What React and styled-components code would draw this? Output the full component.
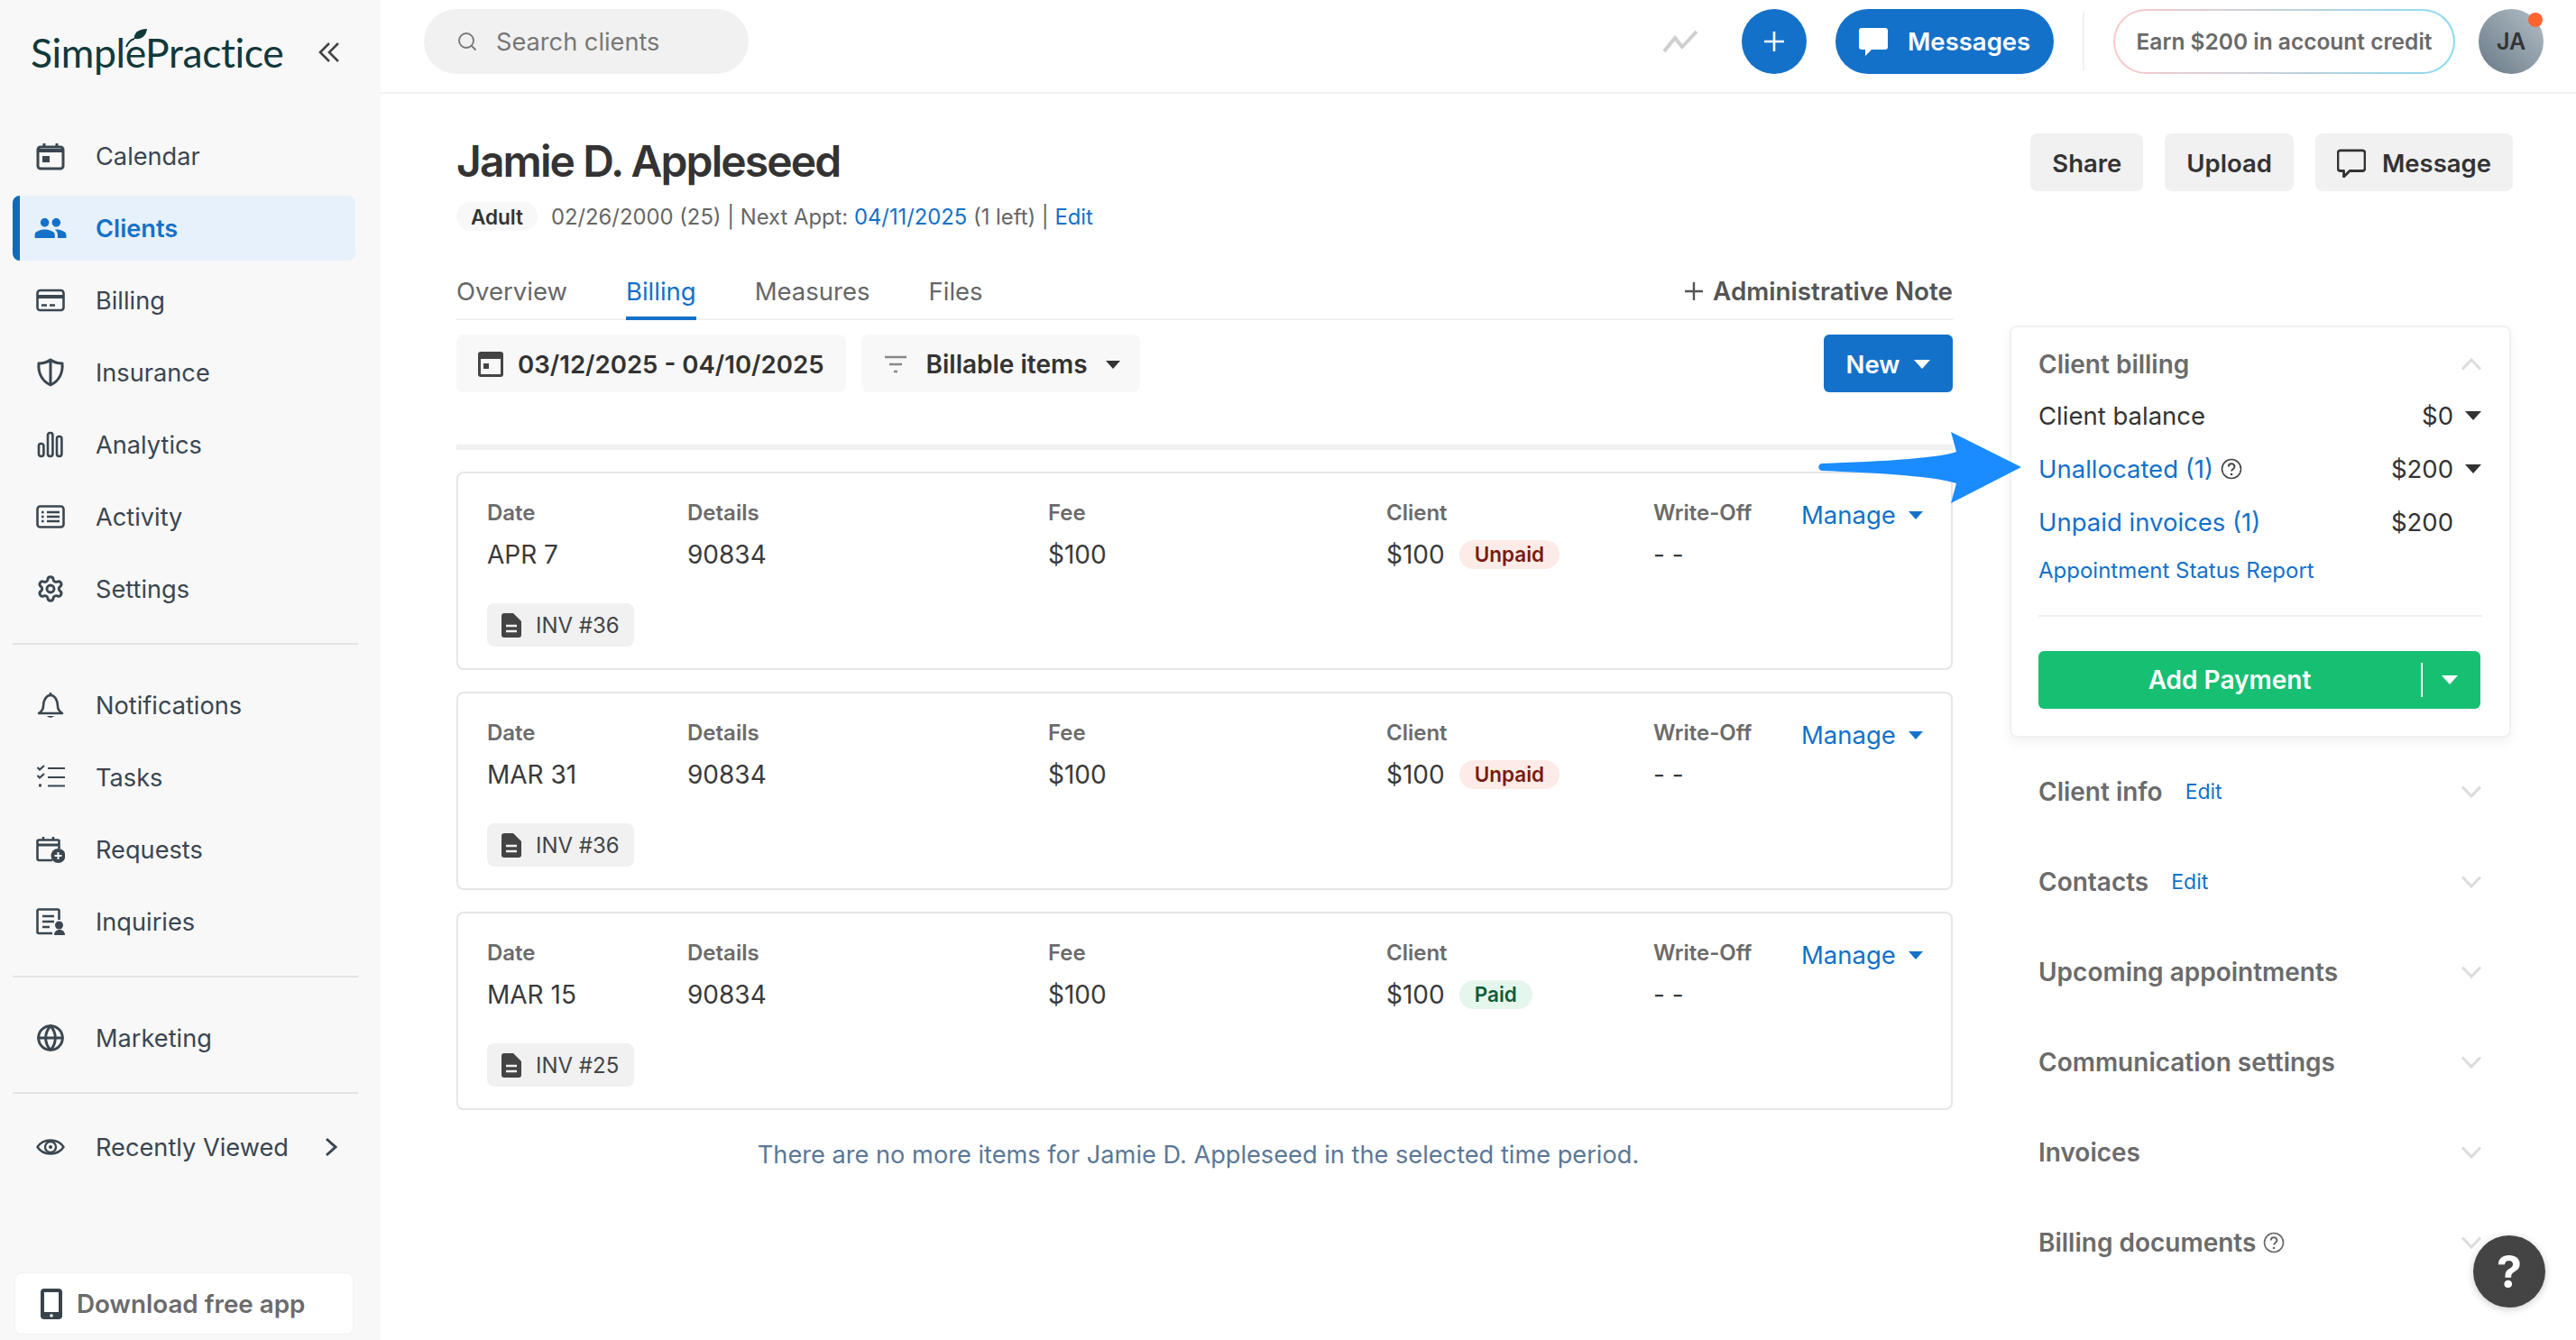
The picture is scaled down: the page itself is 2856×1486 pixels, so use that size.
import { createGlobalStyle, styled } from "styled-components";
import { Globe, Settings, Search } from "lucide-react";
import { MdPeople } from "react-icons/md";

const BLUE = "#1471c9";

const GlobalStyle = createGlobalStyle`
  html, body {
    margin: 0;
    padding: 0;
    background: #fff;
  }
  * {
    box-sizing: border-box;
  }
  body {
    font-family: Inter, "Liberation Sans", sans-serif;
    color: #333;
  }
`;

const CalendarIcon = () => (
  <svg width="32" height="32" viewBox="0 0 32 32" fill="none" stroke="currentColor" strokeWidth="3">
    <rect x="2" y="6" width="28" height="24" rx="3" />
    <path d="M2 10h28" strokeWidth="4" />
    <path d="M9 2v5M23 2v5" />
    <rect x="7" y="16" width="8" height="7" fill="currentColor" stroke="none" />
  </svg>
);

const CardIcon = () => (
  <svg width="32" height="32" viewBox="0 0 32 32" fill="none" stroke="currentColor" strokeWidth="2.6">
    <rect x="1.5" y="5" width="29" height="22" rx="3" />
    <path d="M1.5 12h29" strokeWidth="4" />
    <path d="M6 21.5h6M15 21.5h6" />
  </svg>
);

const ShieldIcon = () => (
  <svg width="32" height="32" viewBox="0 0 32 32" fill="none" stroke="currentColor" strokeWidth="3">
    <path d="M16 2c4 3 9 4 13 4 1 11-4 20-13 24C7 26 2 17 3 6c4 0 9-1 13-4z" strokeLinejoin="round" />
    <path d="M16 2v28" />
  </svg>
);

const BarsIcon = () => (
  <svg width="32" height="32" viewBox="0 0 32 32" fill="none" stroke="currentColor" strokeWidth="2.6">
    <rect x="3" y="15" width="5.4" height="14" rx="2.4" />
    <rect x="13" y="3" width="5.4" height="26" rx="2.4" />
    <rect x="23" y="7" width="5.4" height="22" rx="2.4" />
  </svg>
);

const ListBoxIcon = () => (
  <svg width="32" height="32" viewBox="0 0 32 32" fill="none" stroke="currentColor" strokeWidth="2.6">
    <rect x="1.5" y="4.5" width="29" height="23" rx="3" />
    <path d="M12 11h14M12 16h14M12 21h14" />
    <path d="M6 11h2.6M6 16h2.6M6 21h2.6" />
  </svg>
);

const BellIcon = () => (
  <svg width="32" height="32" viewBox="0 0 32 32" fill="none" stroke="currentColor" strokeWidth="2.6">
    <path d="M3 25c3-2 5-4 5-8 0-6 3-12 8-12s8 6 8 12c0 4 2 6 5 8H3z" strokeLinejoin="round" />
    <path d="M16 2v3" />
    <path d="M12 28c2 2.4 6 2.4 8 0z" fill="currentColor" stroke="none" />
  </svg>
);

const TasksIcon = () => (
  <svg width="32" height="32" viewBox="0 0 32 32" fill="none" stroke="currentColor" strokeWidth="2.2">
    <path d="M1.5 5l2.5 2.5L9 3M1.5 14l2.5 2.5L9 12" />
    <path d="M3 25h3" strokeWidth="3" />
    <path d="M13 6h19M13 16h19M13 25.500h19" />
  </svg>
);

const RequestIcon = () => (
  <svg width="32" height="32" viewBox="0 0 32 32" fill="none" stroke="currentColor" strokeWidth="2.6">
    <path d="M18 28H3a1.500 1.500 0 0 1-1.500-1.500V7A1.500 1.500 0 0 1 3 5.500h21A1.500 1.500 0 0 1 25.500 7v8" />
    <path d="M1.500 11h24" strokeWidth="3" />
    <path d="M8 2v4M19 2v4" />
    <circle cx="24.500" cy="23" r="8" fill="currentColor" stroke="none" />
    <path d="M24.500 19v8M20.500 23h8" stroke="#f8f8f8" strokeWidth="2" />
  </svg>
);

const InquiryIcon = () => (
  <svg width="32" height="32" viewBox="0 0 32 32" fill="none" stroke="currentColor" strokeWidth="2.6">
    <path d="M18 29H3a1.500 1.500 0 0 1-1.500-1.500V4A1.500 1.500 0 0 1 3 2.500h21A1.500 1.500 0 0 1 25.500 4v10" />
    <path d="M7 10h13M7 16h13M7 22h8" />
    <circle cx="25.500" cy="20" r="4.500" fill="currentColor" stroke="none" />
    <path d="M20 31c0-8 12-8 12 0z" fill="currentColor" stroke="none" />
  </svg>
);

const EyeIcon = () => (
  <svg width="32" height="32" viewBox="0 0 32 32" fill="none" stroke="currentColor" strokeWidth="2.4">
    <path d="M1.500 16C8 6 24 6 30.500 16 24 26 8 26 1.500 16z" strokeLinejoin="round" />
    <circle cx="16" cy="16" r="6" />
    <circle cx="16" cy="16" r="2" fill="currentColor" stroke="none" />
  </svg>
);

const TabletIcon = () => (
  <svg width="24" height="34" viewBox="0 0 24 34">
    <rect width="24" height="34" rx="4" fill="#39434b" />
    <rect x="4" y="4" width="16" height="22" fill="#fff" />
    <circle cx="12" cy="30" r="1.800" fill="#fff" />
  </svg>
);

const BubbleIcon = ({ filled, size = 34 }) => (
  <svg width={size} height={size} viewBox="0 0 34 34" fill={filled ? "#fff" : "none"} stroke={filled ? "none" : "currentColor"} strokeWidth="3">
    <path d="M4 2h26a3 3 0 0 1 3 3v18a3 3 0 0 1-3 3H15l-7 7v-7H4a3 3 0 0 1-3-3V5a3 3 0 0 1 3-3z" strokeLinejoin="round" />
  </svg>
);

const DocIcon = () => (
  <svg width="22" height="27" viewBox="0 0 22 27">
    <path d="M3 0h10l9 9v15a3 3 0 0 1-3 3H3a3 3 0 0 1-3-3V3a3 3 0 0 1 3-3z" fill="#444" />
    <path d="M5 14h12M5 20h12" stroke="#f1f1f1" strokeWidth="2.600" />
  </svg>
);

const HelpDot = () => (
  <svg width="24" height="24" viewBox="0 0 24 24" fill="none" stroke="currentColor" strokeWidth="1.600">
    <circle cx="12" cy="12" r="10.500" />
    <path d="M8.800 9.500c0-4.300 6.600-4.300 6.600 0 0 2.600-3.300 2.700-3.300 5" strokeWidth="2" />
    <circle cx="12" cy="18" r="1.300" fill="currentColor" stroke="none" />
  </svg>
);

const Chevron = ({ up }) => (
  <svg width="24" height="14" viewBox="0 0 24 14" fill="none" stroke="#dcdcdc" strokeWidth="3">
    <path d={up ? "M2 12.500L12 2l10 10.500" : "M2 1.500L12 12 22 1.500"} />
  </svg>
);

const Sidebar = styled.aside`
  width: 422px;
  height: 1486px;
  flex: none;
  background: #f8f8f8;
  display: flex;
  flex-direction: column;
  padding: 0 25px 6px 14px;
`;

const LogoBar = styled.div`
  height: 137px;
  flex: none;
  display: flex;
  align-items: flex-start;
  justify-content: space-between;
  padding: 28px 0 0 20px;
`;

const Logo = styled.div`
  position: relative;
  font-family: Lato, sans-serif;
  font-size: 44.5px;
  line-height: 60px;
  letter-spacing: -0.4px;
  color: #12393a;
`;

const Sprout = styled.svg`
  position: absolute;
  left: 102px;
  top: 2px;
`;

const Collapse = styled.svg`
  margin: 18px 20px 0 0;
`;

const NavGroup = styled.nav`
  display: flex;
  flex-direction: column;
  gap: 8px;
  flex: none;
`;

const NavRow = styled.a`
  width: 380px;
  height: 72px;
  display: flex;
  align-items: center;
  gap: 34px;
  padding-left: ${(p) => (p.$active ? "18px" : "26px")};
  border-left: ${(p) => (p.$active ? "8px solid #1469b8" : "0")};
  border-radius: 8px;
  background: ${(p) => (p.$active ? "#e7f1fb" : "transparent")};
  color: ${(p) => (p.$active ? BLUE : "#3a4650")};
  font-size: 27.2px;
  font-weight: ${(p) => (p.$active ? 600 : 400)};
  svg {
    flex: none;
  }
`;

const NavArrow = styled.svg`
  margin-left: auto;
  margin-right: 20px;
`;

const NavLine = styled.hr`
  width: 383px;
  height: 2px;
  border: 0;
  flex: none;
  background: #e3e3e3;
  margin: 24px 0 ${(p) => p.$below || 31}px;
`;

const Download = styled.a`
  margin: auto 0 0 2px;
  height: 69px;
  width: 376px;
  flex: none;
  display: flex;
  align-items: center;
  gap: 16px;
  padding-left: 28px;
  background: #fff;
  border-radius: 8px;
  border: 1px solid #f2f2f2;
  font-size: 27.8px;
  font-weight: 600;
  color: #6b6b6b;
`;

const Main = styled.main`
  flex: 1;
  min-width: 0;
`;

const TopBar = styled.header`
  height: 104px;
  border-bottom: 2px solid #f1f1f1;
  display: flex;
  align-items: flex-start;
  padding: 10px 36px 0 48px;
`;

const SearchBox = styled.div`
  width: 360px;
  height: 72px;
  border-radius: 36px;
  background: #f1f1f1;
  display: flex;
  align-items: center;
  gap: 20px;
  padding-left: 36px;
  font-size: 27.2px;
  color: #777;
`;

const TopActions = styled.div`
  margin-left: auto;
  height: 72px;
  display: flex;
  align-items: center;
`;

const Trend = styled.svg`
  margin-right: 48px;
`;

const PlusCircle = styled.button`
  width: 72px;
  height: 72px;
  border: 0;
  padding: 0;
  border-radius: 50%;
  background: ${BLUE};
  display: flex;
  align-items: center;
  justify-content: center;
  margin-right: 32px;
`;

const MessagesButton = styled.button`
  width: 242px;
  height: 72px;
  border: 0;
  padding: 0 0 0 25px;
  border-radius: 36px;
  background: ${BLUE};
  color: #fff;
  font: 600 27.5px Inter, sans-serif;
  display: flex;
  align-items: center;
  gap: 21px;
`;

const TopDivider = styled.span`
  width: 2px;
  height: 64px;
  background: #f1f1f1;
  margin: 0 32px 0 32px;
`;

const EarnPill = styled.a`
  width: 379px;
  height: 72px;
  border-radius: 36px;
  border: 2px solid transparent;
  background: linear-gradient(#fff, #fff) padding-box,
    linear-gradient(90deg, #fbc9c9, #8adaf0) border-box;
  display: flex;
  align-items: center;
  justify-content: center;
  font-size: 24.5px;
  font-weight: 600;
  color: #6a6a6a;
  white-space: nowrap;
  margin-right: 26px;
`;

const Avatar = styled.div`
  position: relative;
  width: 72px;
  height: 72px;
  border-radius: 50%;
  background: linear-gradient(45deg, #687a87, #b3bec6);
  display: flex;
  align-items: center;
  justify-content: center;
  font-size: 25px;
  font-weight: 600;
  color: #333;
  &::after {
    content: "";
    position: absolute;
    right: 1px;
    top: 4px;
    width: 16px;
    height: 16px;
    border-radius: 50%;
    background: #ff6331;
  }
`;

const Header = styled.section`
  display: flex;
  justify-content: space-between;
  align-items: flex-start;
  padding: 44px 70px 0 84px;
`;

const Title = styled.h1`
  margin: 3px 0 17px;
  font-size: 48px;
  line-height: 56px;
  font-weight: 600;
  letter-spacing: -1.9px;
  color: #333;
`;

const Meta = styled.div`
  display: flex;
  align-items: center;
  height: 32px;
  font-size: 23.8px;
  color: #666;
  white-space: pre;
`;

const AgeBadge = styled.span`
  height: 32px;
  width: 90px;
  border-radius: 16px;
  background: #f8f8f8;
  display: flex;
  align-items: center;
  justify-content: center;
  font-size: 22.5px;
  font-weight: 600;
  color: #333;
  margin-right: 15px;
`;

const TextLink = styled.a`
  color: ${BLUE};
`;

const HeaderActions = styled.div`
  display: flex;
  gap: 24px;
`;

const GrayButton = styled.button`
  height: 64px;
  padding: 2px 24px 0;
  border: 0;
  border-radius: 8px;
  background: #f1f1f1;
  color: #333;
  font: 600 27.5px Inter, sans-serif;
  display: flex;
  align-items: center;
  gap: 18px;
`;

const Columns = styled.div`
  display: flex;
  align-items: flex-start;
  gap: 63px;
  padding: 0 72px 0 84px;
`;

const LeftColumn = styled.div`
  width: 1659px;
  flex: none;
  margin-top: 34px;
`;

const RightColumn = styled.div`
  width: 556px;
  flex: none;
  margin-top: 105px;
`;

const Tabs = styled.div`
  height: 65px;
  display: flex;
  gap: 65px;
  border-bottom: 2px solid #f1f1f1;
`;

const Tab = styled.a`
  height: 65px;
  display: flex;
  align-items: center;
  font-size: 27.5px;
  color: ${(p) => (p.$active ? BLUE : "#666")};
  box-shadow: ${(p) => (p.$active ? `inset 0 -4px 0 ${BLUE}` : "none")};
`;

const NoteLink = styled.a`
  margin-left: auto;
  display: flex;
  align-items: center;
  gap: 9px;
  font-size: 27.8px;
  font-weight: 600;
  color: #555;
  height: 65px;
`;

const FilterRow = styled.div`
  margin-top: 16px;
  height: 64px;
  display: flex;
  gap: 17px;
`;

const FilterButton = styled.button`
  height: 64px;
  padding: 2px ${(p) => p.$right || 24}px 0 24px;
  border: 0;
  border-radius: 8px;
  background: #f8f8f8;
  color: #333;
  font: 600 ${(p) => p.$size || 28}px Inter, sans-serif;
  display: flex;
  align-items: center;
  gap: ${(p) => p.$gap || 16}px;
`;

const Caret = styled.i`
  display: block;
  flex: none;
  width: 0;
  height: 0;
  border-left: ${(p) => p.$size || 9}px solid transparent;
  border-right: ${(p) => p.$size || 9}px solid transparent;
  border-top: ${(p) => (p.$size || 9) + 1}px solid ${(p) => p.$color || "#333"};
`;

const NewButton = styled.button`
  margin-left: auto;
  width: 143px;
  height: 64px;
  border: 0;
  padding: 2px 0 0;
  border-radius: 6px;
  background: ${BLUE};
  color: #fff;
  font: 600 27.5px Inter, sans-serif;
  display: flex;
  align-items: center;
  justify-content: center;
  gap: 16px;
`;

const LoadBar = styled.div`
  margin-top: 58px;
  height: 6px;
  background: #f1f1f1;
`;

const CardList = styled.div`
  margin-top: 24px;
  display: flex;
  flex-direction: column;
  gap: 24px;
`;

const Card = styled.article`
  height: 220px;
  border: 2px solid #e6e6e6;
  border-radius: 8px;
  padding: 29px 31px 0 32px;
`;

const CardGrid = styled.div`
  display: grid;
  grid-template-columns: 222px 400px 375px 296px 164px 1fr;
`;

const Label = styled.div`
  font-size: 24px;
  line-height: 30px;
  font-weight: 600;
  color: #6b6b6b;
`;

const Value = styled.div`
  margin-top: 13px;
  height: 36px;
  font-size: 28px;
  line-height: 36px;
  color: #3a3a3a;
  display: flex;
  align-items: center;
  gap: 16px;
`;

const StatusBadge = styled.span`
  height: 32px;
  padding: 0 17px;
  border-radius: 16px;
  display: flex;
  align-items: center;
  font-size: 22.5px;
  font-weight: 600;
  background: ${(p) => (p.$paid ? "#e5f6ed" : "#fdebe8")};
  color: ${(p) => (p.$paid ? "#0f5c38" : "#7a1a0a")};
`;

const Manage = styled.a`
  display: flex;
  align-items: center;
  justify-content: space-between;
  height: 34px;
  font-size: 27.5px;
  color: ${BLUE};
`;

const InvoiceChip = styled.a`
  margin-top: 36px;
  width: 163px;
  height: 48px;
  border-radius: 8px;
  background: #f1f1f1;
  display: flex;
  align-items: center;
  gap: 16px;
  padding-left: 16px;
  font-size: 24px;
  color: #444;
`;

const EndNote = styled.p`
  margin: 33px 0 0;
  padding-right: 14px;
  text-align: center;
  font-size: 27.2px;
  line-height: 34px;
  color: #5b7896;
`;

const BillingCard = styled.div`
  height: 457px;
  border: 2px solid #f1f1f1;
  border-radius: 8px;
  padding: 24px 30px 0;
  box-shadow: 0 6px 14px rgba(0, 0, 0, 0.05);
  background: #fff;
`;

const SectionHead = styled.div`
  display: flex;
  align-items: center;
  justify-content: space-between;
  height: 34px;
  font-size: 28px;
  font-weight: 600;
  color: #6b6b6b;
  margin-bottom: 10px;
`;

const MoneyRow = styled.div`
  height: 59px;
  display: flex;
  align-items: center;
  font-size: 27.5px;
  color: #333;
`;

const MoneyValue = styled.span`
  margin-left: auto;
  display: flex;
  align-items: center;
  gap: 12px;
`;

const CaretSlot = styled.span`
  width: 20px;
  display: flex;
  justify-content: center;
`;

const LinkText = styled.a`
  display: flex;
  align-items: center;
  gap: 8px;
  color: ${BLUE};
  svg {
    color: #444;
  }
`;

const ReportLink = styled.a`
  display: block;
  margin-top: 10px;
  font-size: 24px;
  line-height: 30px;
  color: ${BLUE};
`;

const PanelLine = styled.hr`
  height: 2px;
  border: 0;
  background: #f1f1f1;
  margin: 34px 0 38px;
`;

const PayButton = styled.button`
  width: 490px;
  height: 64px;
  border: 0;
  padding: 0;
  border-radius: 6px;
  background: #17bf73;
  color: #fff;
  font: 600 28px Inter, sans-serif;
  display: flex;
  align-items: center;
`;

const PayLabel = styled.span`
  width: 424px;
  text-align: center;
`;

const PayDivider = styled.span`
  width: 2px;
  height: 38px;
  background: #fff;
  margin-right: 21px;
`;

const Accordion = styled.div`
  margin-top: 10px;
  display: flex;
  flex-direction: column;
`;

const AccordionRow = styled.div`
  height: 100px;
  display: flex;
  align-items: center;
  padding: 0 32px;
  font-size: 28px;
  font-weight: 600;
  color: #6b6b6b;
  svg:last-child {
    margin-left: auto;
  }
`;

const SmallEdit = styled.a`
  margin-left: 25px;
  font-size: 23px;
  font-weight: 400;
  color: ${BLUE};
`;

const RowHelp = styled.span`
  margin-left: 8px;
  display: flex;
  color: #666;
`;

const Page = styled.div`
  position: relative;
  width: 2856px;
  height: 1486px;
  overflow: hidden;
  display: flex;
`;

const Arrow = styled.svg`
  position: absolute;
  left: 2016px;
  top: 479px;
`;

const HelpButton = styled.button`
  position: absolute;
  right: 34px;
  bottom: 36px;
  width: 80px;
  height: 80px;
  border: 0;
  padding: 0;
  border-radius: 50%;
  background: #444;
  color: #fff;
  font: 700 50px Inter, sans-serif;
  box-shadow: 0 2px 8px rgba(0, 0, 0, 0.2);
`;

const mainNav = [
  ["Calendar", <CalendarIcon key="i" />],
  ["Clients", <MdPeople key="i" size={38} style={{ margin: "0 -3px" }} />, true],
  ["Billing", <CardIcon key="i" />],
  ["Insurance", <ShieldIcon key="i" />],
  ["Analytics", <BarsIcon key="i" />],
  ["Activity", <ListBoxIcon key="i" />],
  ["Settings", <Settings key="i" size={32} strokeWidth={2.2} />],
];

const workNav = [
  ["Notifications", <BellIcon key="i" />],
  ["Tasks", <TasksIcon key="i" />],
  ["Requests", <RequestIcon key="i" />],
  ["Inquiries", <InquiryIcon key="i" />],
];

const items = [
  { date: "APR 7", inv: "INV #36", status: "Unpaid" },
  { date: "MAR 31", inv: "INV #36", status: "Unpaid" },
  { date: "MAR 15", inv: "INV #25", status: "Paid" },
];

const BillingItem = ({ date, inv, status }) => (
  <Card>
    <CardGrid>
      <div>
        <Label>Date</Label>
        <Value>{date}</Value>
      </div>
      <div>
        <Label>Details</Label>
        <Value>90834</Value>
      </div>
      <div>
        <Label>Fee</Label>
        <Value>$100</Value>
      </div>
      <div>
        <Label>Client</Label>
        <Value>
          $100
          <StatusBadge $paid={status === "Paid"}>{status}</StatusBadge>
        </Value>
      </div>
      <div>
        <Label>Write-Off</Label>
        <Value>- -</Value>
      </div>
      <Manage>
        Manage
        <Caret $size={8} $color={BLUE} />
      </Manage>
    </CardGrid>
    <InvoiceChip>
      <DocIcon />
      {inv}
    </InvoiceChip>
  </Card>
);

export default function App() {
  return (
    <Page>
      <GlobalStyle />
      <Sidebar>
        <LogoBar>
          <Logo>
            SimplePractice
            <Sprout width="34" height="24" viewBox="0 0 34 24">
              <path d="M4 22c2-5 5-8 9-9" fill="none" stroke="#12393a" strokeWidth="2" />
              <path d="M13 13c-1-6 4-11 14-11-1 8-6 12-14 11z" fill="#12393a" />
            </Sprout>
          </Logo>
          <Collapse width="24" height="24" viewBox="0 0 24 24" fill="none" stroke="#444" strokeWidth="2.600">
            <path d="M12 2L2 12l10 10M22 2L12 12l10 10" />
          </Collapse>
        </LogoBar>
        <NavGroup>
          {mainNav.map(([label, icon, active]) => (
            <NavRow key={label} $active={active}>
              {icon}
              {label}
            </NavRow>
          ))}
        </NavGroup>
        <NavLine />
        <NavGroup>
          {workNav.map(([label, icon]) => (
            <NavRow key={label}>
              {icon}
              {label}
            </NavRow>
          ))}
        </NavGroup>
        <NavLine />
        <NavGroup>
          <NavRow>
            <Globe size={32} strokeWidth={2.2} />
            Marketing
          </NavRow>
        </NavGroup>
        <NavLine $below={23} />
        <NavGroup>
          <NavRow>
            <EyeIcon />
            Recently Viewed
            <NavArrow width="14" height="24" viewBox="0 0 14 24" fill="none" stroke="#3a4650" strokeWidth="3">
              <path d="M2 3l10 9-10 9" />
            </NavArrow>
          </NavRow>
        </NavGroup>
        <Download>
          <TabletIcon />
          Download free app
        </Download>
      </Sidebar>

      <Main>
        <TopBar>
          <SearchBox>
            <Search size={24} color="#777" strokeWidth={1.8} />
            Search clients
          </SearchBox>
          <TopActions>
            <Trend width="40" height="26" viewBox="0 0 40 26" fill="none" stroke="#cfcfcf" strokeWidth="4">
              <path d="M2 24L14 9l8 10L38 2" />
            </Trend>
            <PlusCircle>
              <svg width="24" height="24" viewBox="0 0 24 24" stroke="#fff" strokeWidth="2.600">
                <path d="M12 1v22M1 12h22" />
              </svg>
            </PlusCircle>
            <MessagesButton>
              <BubbleIcon filled />
              Messages
            </MessagesButton>
            <TopDivider />
            <EarnPill>Earn $200 in account credit</EarnPill>
            <Avatar>JA</Avatar>
          </TopActions>
        </TopBar>

        <Header>
          <div>
            <Title>Jamie D. Appleseed</Title>
            <Meta>
              <AgeBadge>Adult</AgeBadge>
              02/26/2000 (25) | Next Appt: <TextLink>04/11/2025</TextLink> (1 left) | <TextLink>Edit</TextLink>
            </Meta>
          </div>
          <HeaderActions>
            <GrayButton>Share</GrayButton>
            <GrayButton>Upload</GrayButton>
            <GrayButton>
              <BubbleIcon size={32} />
              Message
            </GrayButton>
          </HeaderActions>
        </Header>

        <Columns>
          <LeftColumn>
            <Tabs>
              <Tab>Overview</Tab>
              <Tab $active>Billing</Tab>
              <Tab>Measures</Tab>
              <Tab>Files</Tab>
              <NoteLink>
                <svg width="24" height="24" viewBox="0 0 24 24" stroke="#555" strokeWidth="2.400">
                  <path d="M12 2v20M2 12h20" />
                </svg>
                Administrative Note
              </NoteLink>
            </Tabs>
            <FilterRow>
              <FilterButton $size={27.6}>
                <svg width="28" height="28" viewBox="0 0 28 28">
                  <rect width="28" height="28" rx="3" fill="#444" />
                  <rect x="3" y="8" width="22" height="17" fill="#f8f8f8" />
                  <rect x="6" y="13" width="6" height="6" fill="#444" />
                </svg>
                03/12/2025 - 04/10/2025
              </FilterButton>
              <FilterButton $gap={20} $right={22}>
                <svg width="28" height="24" viewBox="0 0 28 24" stroke="#888" strokeWidth="2.600">
                  <path d="M2 4h24M7 12h14M12 20h4" />
                </svg>
                Billable items
                <Caret $size={8} />
              </FilterButton>
              <NewButton>
                New
                <Caret $color="#fff" />
              </NewButton>
            </FilterRow>
            <LoadBar />
            <CardList>
              {items.map((item) => (
                <BillingItem key={item.date} {...item} />
              ))}
            </CardList>
            <EndNote>There are no more items for Jamie D. Appleseed in the selected time period.</EndNote>
          </LeftColumn>

          <RightColumn>
            <BillingCard>
              <SectionHead>
                Client billing
                <Chevron up />
              </SectionHead>
              <MoneyRow>
                Client balance
                <MoneyValue>
                  $0
                  <CaretSlot>
                    <Caret />
                  </CaretSlot>
                </MoneyValue>
              </MoneyRow>
              <MoneyRow>
                <LinkText>
                  Unallocated (1)
                  <HelpDot />
                </LinkText>
                <MoneyValue>
                  $200
                  <CaretSlot>
                    <Caret />
                  </CaretSlot>
                </MoneyValue>
              </MoneyRow>
              <MoneyRow>
                <LinkText>Unpaid invoices (1)</LinkText>
                <MoneyValue>
                  $200
                  <CaretSlot />
                </MoneyValue>
              </MoneyRow>
              <ReportLink>Appointment Status Report</ReportLink>
              <PanelLine />
              <PayButton>
                <PayLabel>Add Payment</PayLabel>
                <PayDivider />
                <Caret $color="#fff" />
              </PayButton>
            </BillingCard>
            <Accordion>
              <AccordionRow>
                Client info
                <SmallEdit>Edit</SmallEdit>
                <Chevron />
              </AccordionRow>
              <AccordionRow>
                Contacts
                <SmallEdit>Edit</SmallEdit>
                <Chevron />
              </AccordionRow>
              <AccordionRow>
                Upcoming appointments
                <Chevron />
              </AccordionRow>
              <AccordionRow>
                Communication settings
                <Chevron />
              </AccordionRow>
              <AccordionRow>
                Invoices
                <Chevron />
              </AccordionRow>
              <AccordionRow>
                Billing documents
                <RowHelp>
                  <HelpDot />
                </RowHelp>
                <Chevron />
              </AccordionRow>
            </Accordion>
          </RightColumn>
        </Columns>
      </Main>

      <Arrow width="226" height="80" viewBox="0 0 226 80">
        <path
          d="M4 35C60 33 130 30 153 22L147 0l78 39-78 40 6-22C130 49 60 45 4 43c-5-1-5-7 0-8z"
          fill="#1a8cff"
        />
      </Arrow>
      <HelpButton>?</HelpButton>
    </Page>
  );
}
